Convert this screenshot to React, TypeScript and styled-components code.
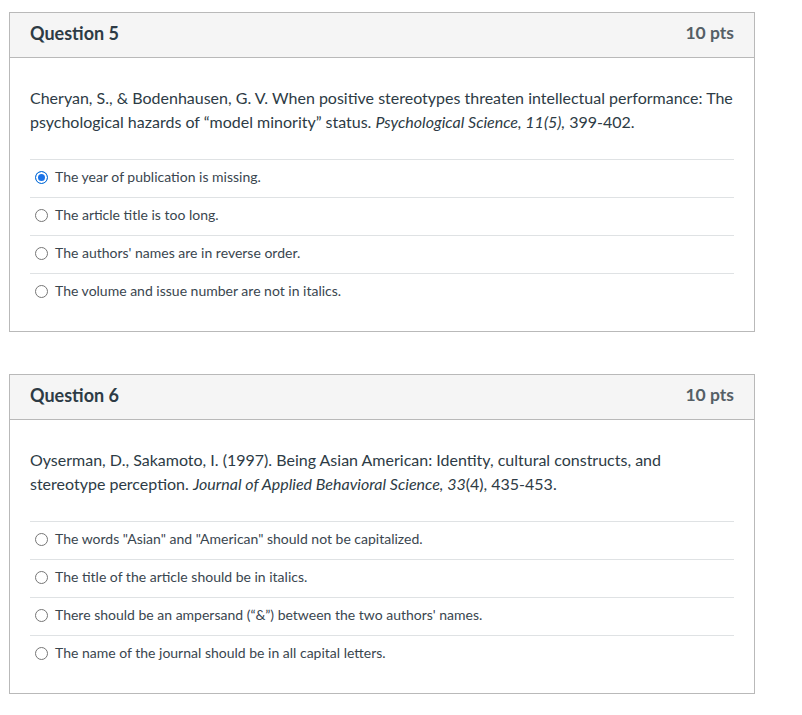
import * as React from 'react';
import styled, { createGlobalStyle } from 'styled-components';

const GlobalStyle = createGlobalStyle`
	body {
		margin: 0;
		background: #ffffff;
		font-family: Lato, "Liberation Sans", sans-serif;
		color: #2d3b45;
	}
`;

interface Answer {
	text: string;
	checked?: boolean;
}

interface QuestionData {
	title: string;
	points: string;
	body: React.ReactNode;
	answers: Answer[];
}

const questions: QuestionData[] = [
	{
		title: 'Question 5',
		points: '10 pts',
		body: (
			<>
				Cheryan, S., &amp; Bodenhausen, G. V. When positive stereotypes threaten intellectual performance: The
				psychological hazards of “model minority” status. <em>Psychological Science, 11(5),</em> 399-402.
			</>
		),
		answers: [
			{ text: 'The year of publication is missing.', checked: true },
			{ text: 'The article title is too long.' },
			{ text: "The authors' names are in reverse order." },
			{ text: 'The volume and issue number are not in italics.' }
		]
	},
	{
		title: 'Question 6',
		points: '10 pts',
		body: (
			<>
				Oyserman, D., Sakamoto, I. (1997). Being Asian American: Identity, cultural constructs, and
				stereotype perception. <em>Journal of Applied Behavioral Science, 33</em>(4), 435-453.
			</>
		),
		answers: [
			{ text: 'The words "Asian" and "American" should not be capitalized.' },
			{ text: 'The title of the article should be in italics.' },
			{ text: 'There should be an ampersand (“&”) between the two authors\' names.' },
			{ text: 'The name of the journal should be in all capital letters.' }
		]
	}
];

const Page = styled.div`
	padding: 12px 0 20px 9px;
	width: 746px;
	display: flex;
	flex-direction: column;
	gap: 42px;
`;

const Card = styled.div`
	border: 1px solid #b9b9b9;
	background: #ffffff;
`;

const Header = styled.div`
	display: flex;
	justify-content: space-between;
	align-items: center;
	box-sizing: border-box;
	height: 45px;
	padding: 0 20px 5px;
	background: #f5f5f5;
	border-bottom: 1px solid #b9b9b9;
`;

const Title = styled.div`
	font-size: 18px;
	font-weight: 700;
	color: #2d3b45;
`;

const Points = styled.div`
	font-size: 17.5px;
	font-weight: 700;
	color: #555f66;
`;

const Body = styled.div`
	padding: 28px 20px 20px;
`;

const Text = styled.div`
	font-size: 16px;
	line-height: 24px;
	color: #2d3b45;
	margin-bottom: 25px;
`;

const Row = styled.div`
	display: flex;
	align-items: center;
	gap: 7px;
	box-sizing: border-box;
	height: 38px;
	padding: 0 0 4px 5px;
	border-top: 1px solid #dfe2e4;
	font-size: 14px;
	color: #3a464f;
`;

const Radio = styled.span<{ $checked?: boolean }>`
	box-sizing: border-box;
	width: 13px;
	height: 13px;
	margin-top: 2px;
	border-radius: 50%;
	flex-shrink: 0;
	border: 1px solid ${p => (p.$checked ? '#0b6fd6' : '#767676')};
	background: ${p => (p.$checked ? '#1a73e8' : '#ffffff')};
	box-shadow: ${p => (p.$checked ? 'inset 0 0 0 2px #ffffff' : 'none')};
`;

const Question: React.FC<{ q: QuestionData }> = ({ q }) => (
	<Card>
		<Header>
			<Title>{q.title}</Title>
			<Points>{q.points}</Points>
		</Header>
		<Body>
			<Text>{q.body}</Text>
			{q.answers.map(a => (
				<Row key={a.text}>
					<Radio $checked={a.checked} />
					{a.text}
				</Row>
			))}
		</Body>
	</Card>
);

export default function App() {
	return (
		<>
			<GlobalStyle />
			<Page>
				{questions.map(q => (
					<Question key={q.title} q={q} />
				))}
			</Page>
		</>
	);
}
